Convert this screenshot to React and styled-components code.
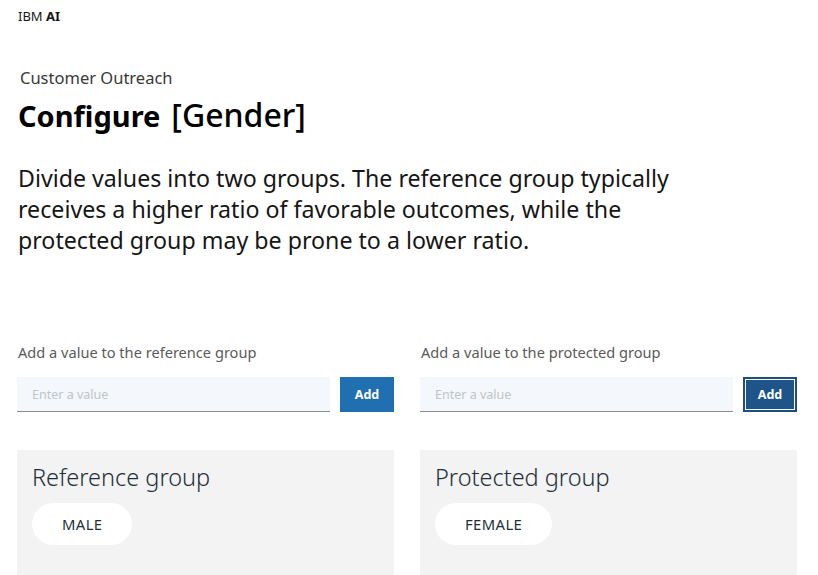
import React from "react";
import styled, { createGlobalStyle } from "styled-components";

const Global = createGlobalStyle`
  html, body { margin: 0; padding: 0; background: #ffffff; }
  body { font-family: "Noto Sans", "Open Sans", sans-serif; color: #161616; }
  * { box-sizing: border-box; }
`;

const Page = styled.div`
  width: 818px;
  height: 575px;
  overflow: hidden;
  padding: 8px 21px 0 17px;
`;

const Brand = styled.div`
  font-size: 13px;
  line-height: 16px;
  margin-left: 1px;
  color: #161616;
  b { font-weight: 700; }
`;

const Header = styled.header`
  margin-top: 44px;
  padding-left: 3px;
`;

const Crumb = styled.div`
  font-size: 16.5px;
  line-height: 20px;
  color: #393939;
`;

const Title = styled.h1`
  margin: 9px 0 0 -2px;
  font-size: 29px;
  line-height: 36px;
  font-weight: 700;
  color: #000;
  span { font-weight: 500; margin-left: 11px; font-size: 32px; }
`;

const Lead = styled.p`
  margin: 29px 0 0 -2px;
  width: 700px;
  font-size: 23.2px;
  line-height: 31px;
  color: #161616;
`;

const Columns = styled.div`
  margin-top: 87px;
  display: grid;
  grid-template-columns: 377px 377px;
  column-gap: 26px;
`;

const Column = styled.section`
  display: flex;
  flex-direction: column;
`;

const Label = styled.label`
  font-size: 14.6px;
  line-height: 18px;
  color: #5a5a5a;
  margin-left: 1px;
`;

const InputRow = styled.div`
  margin-top: 16px;
  display: flex;
  gap: 10px;
`;

const Input = styled.input`
  flex: 1;
  height: 35px;
  border: none;
  border-bottom: 1px solid #8d8d8d;
  background: #f4f7fb;
  padding: 0 15px;
  font-family: inherit;
  font-size: 12.5px;
  outline: none;
  &::placeholder { color: #c0c4c8; }
`;

const AddButton = styled.button`
  width: 54px;
  height: 35px;
  border: ${p => (p.$focused ? "2px solid #1d4f80" : "none")};
  box-shadow: ${p => (p.$focused ? "inset 0 0 0 1px #ffffff" : "none")};
  background: ${p => (p.$focused ? "#1e5488" : "#206fb1")};
  color: #fff;
  font-family: inherit;
  font-weight: 700;
  font-size: 12.5px;
  padding: 0;
  cursor: pointer;
`;

const Panel = styled.div`
  margin-top: 38px;
  height: 130px;
  background: #f3f3f3;
  padding: 12px 15px;
`;

const PanelTitle = styled.h2`
  margin: 0;
  font-size: 23.5px;
  line-height: 30px;
  font-weight: 300;
  color: #1f2f3a;
`;

const Chip = styled.div`
  margin-top: 11px;
  display: inline-flex;
  align-items: center;
  justify-content: center;
  height: 42px;
  padding: 0 30px;
  border-radius: 21px;
  background: #ffffff;
  font-size: 14.8px;
  letter-spacing: 0.4px;
  color: #1f2f3a;
`;

const groups = [
  { label: "Add a value to the reference group", title: "Reference group", chip: "MALE", focused: false },
  { label: "Add a value to the protected group", title: "Protected group", chip: "FEMALE", focused: true },
];

export default function App() {
  return (
    <>
      <Global />
      <Page>
        <Brand>IBM <b>AI</b></Brand>
        <Header>
          <Crumb>Customer Outreach</Crumb>
          <Title>Configure<span>[Gender]</span></Title>
          <Lead>
            Divide values into two groups. The reference group typically receives a higher ratio of favorable outcomes, while the protected group may be prone to a lower ratio.
          </Lead>
        </Header>
        <Columns>
          {groups.map(g => (
            <Column key={g.title}>
              <Label>{g.label}</Label>
              <InputRow>
                <Input placeholder="Enter a value" />
                <AddButton $focused={g.focused}>Add</AddButton>
              </InputRow>
              <Panel>
                <PanelTitle>{g.title}</PanelTitle>
                <div><Chip>{g.chip}</Chip></div>
              </Panel>
            </Column>
          ))}
        </Columns>
      </Page>
    </>
  );
}
